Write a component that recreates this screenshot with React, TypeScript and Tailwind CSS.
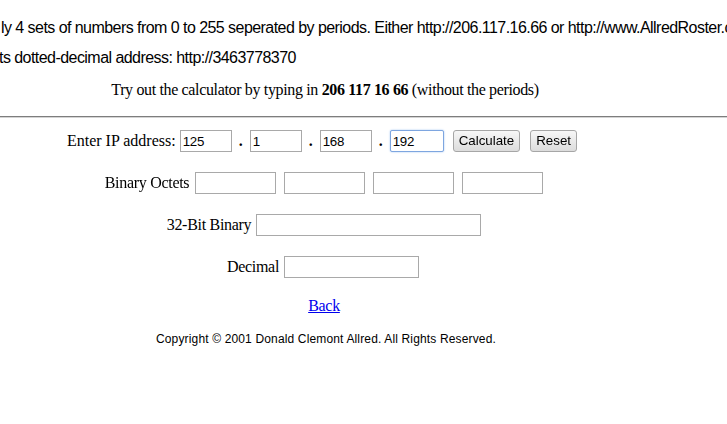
import { useState } from 'react';

const serif = "font-['Liberation_Serif','Times_New_Roman',serif]";
const sans = "font-['Liberation_Sans',Arial,sans-serif]";

function Field({ width, value, focused }: { width: string; value?: string; focused?: boolean }) {
  return (
    <input
      type="text"
      defaultValue={value}
      autoFocus={focused}
      className={`${width} h-[22px] px-[2px] text-[13.33px] text-black bg-white outline-none ${sans} ${
        focused
          ? 'border border-[#7ea6e0] rounded-[2px] shadow-[0_0_2px_#9ec3f0]'
          : 'border border-[#a9a9a9]'
      }`}
    />
  );
}

function Btn({ children }: { children: string }) {
  return (
    <button
      type="button"
      className={`h-[22px] px-[5px] text-[13.33px] text-black rounded-[3px] border border-[#a6a6a6] bg-gradient-to-b from-[#f7f7f7] to-[#dcdcdc] ${sans}`}
    >
      {children}
    </button>
  );
}

function Dot() {
  return <span className={`${serif} font-bold text-[16px] text-black w-[18px] text-center leading-none`}>.</span>;
}

export default function App() {
  const [octets] = useState(['125', '1', '168', '192']);

  return (
    <div className="w-full h-[424px] overflow-hidden bg-white text-black">
      {/* Intro text, scrolled off to the left */}
      <div className={`${sans} text-[16px] leading-[18px] tracking-[-0.55px] whitespace-nowrap`}>
        <div className="pt-[19px] ml-[1px]">
          ly 4 sets of numbers from 0 to 255 seperated by periods. Either http://206.117.16.66 or http://www.AllredRoster.com
        </div>
        <div className="mt-[12px] ml-[-1px]">ts dotted-decimal address: http://3463778370</div>
      </div>

      <div className="w-[650px]">
        <p className={`${serif} text-[16px] leading-[18px] tracking-[-0.35px] text-center mt-[14px]`}>
          Try out the calculator by typing in <b>206 117 16 66</b> (without the periods)
        </p>
      </div>

      <div className="mt-[17px] border-t border-[#7d7d7d] border-b border-b-[#d4d4d4]" />

      {/* Calculator form */}
      <div className={`w-[648px] ${serif} text-[16px] tracking-[-0.3px]`}>
        <div className="mt-[12px] flex items-center justify-center h-[22px] ml-[-4px]">
          <span className="mr-[4px] tracking-normal">Enter IP address:</span>
          <Field width="w-[52px]" value={octets[0]} />
          <Dot />
          <Field width="w-[52px]" value={octets[1]} />
          <Dot />
          <Field width="w-[52px]" value={octets[2]} />
          <Dot />
          <Field width="w-[54px]" value={octets[3]} focused />
          <div className="ml-[9px] flex gap-[10px] tracking-normal">
            <Btn>Calculate</Btn>
            <Btn>Reset</Btn>
          </div>
        </div>

        <div className="mt-[20px] flex items-center justify-center h-[22px] gap-[8px]">
          <span className="mr-[-2px]">Binary Octets</span>
          <Field width="w-[81px]" />
          <Field width="w-[81px]" />
          <Field width="w-[81px]" />
          <Field width="w-[81px]" />
        </div>

        <div className="mt-[20px] flex items-center justify-center h-[22px] gap-[5px]">
          <span>32-Bit Binary</span>
          <Field width="w-[225px]" />
        </div>

        <div className="mt-[20px] flex items-center justify-center h-[22px] gap-[5px] mr-[2px]">
          <span>Decimal</span>
          <Field width="w-[135px]" />
        </div>

        <div className="mt-[19px] text-center leading-[18px]">
          <a href="#" className="text-[#0000ee] underline">
            Back
          </a>
        </div>

        <p className={`${sans} text-[12px] leading-[14px] tracking-[0.15px] text-center mt-[17px] ml-[4px]`}>
          Copyright © 2001 Donald Clemont Allred. All Rights Reserved.
        </p>
      </div>
    </div>
  );
}
